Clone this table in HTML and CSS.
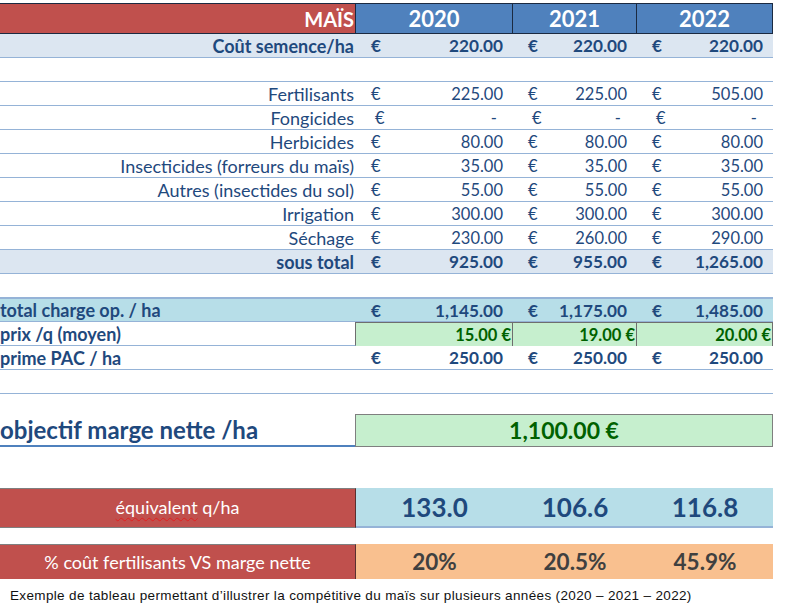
FILE: index.html
```html
<!DOCTYPE html>
<html lang="fr">
<head>
<meta charset="utf-8">
<title>Maïs</title>
<link rel="stylesheet" href="styles.css">
</head>
<body>
<div class="sheet">
  <div class="row head">
    <div class="lab">MAÏS</div>
    <div class="yr">2020</div>
    <div class="yr">2021</div>
    <div class="yr">2022</div>
  </div>
  <div class="row band bold">
    <div class="lab">Coût semence/ha</div>
    <div class="m"><span>€</span><span>220.00</span></div>
    <div class="m"><span>€</span><span>220.00</span></div>
    <div class="m"><span>€</span><span>220.00</span></div>
  </div>
  <div class="row"><div class="lab"></div></div>
  <div class="row">
    <div class="lab">Fertilisants</div>
    <div class="m"><span>€</span><span>225.00</span></div>
    <div class="m"><span>€</span><span>225.00</span></div>
    <div class="m"><span>€</span><span>505.00</span></div>
  </div>
  <div class="row">
    <div class="lab">Fongicides</div>
    <div class="m dash"><span>€</span><span>-</span></div>
    <div class="m dash"><span>€</span><span>-</span></div>
    <div class="m dash"><span>€</span><span>-</span></div>
  </div>
  <div class="row">
    <div class="lab">Herbicides</div>
    <div class="m"><span>€</span><span>80.00</span></div>
    <div class="m"><span>€</span><span>80.00</span></div>
    <div class="m"><span>€</span><span>80.00</span></div>
  </div>
  <div class="row">
    <div class="lab">Insecticides (forreurs du maïs)</div>
    <div class="m"><span>€</span><span>35.00</span></div>
    <div class="m"><span>€</span><span>35.00</span></div>
    <div class="m"><span>€</span><span>35.00</span></div>
  </div>
  <div class="row">
    <div class="lab">Autres (insectides du sol)</div>
    <div class="m"><span>€</span><span>55.00</span></div>
    <div class="m"><span>€</span><span>55.00</span></div>
    <div class="m"><span>€</span><span>55.00</span></div>
  </div>
  <div class="row">
    <div class="lab">Irrigation</div>
    <div class="m"><span>€</span><span>300.00</span></div>
    <div class="m"><span>€</span><span>300.00</span></div>
    <div class="m"><span>€</span><span>300.00</span></div>
  </div>
  <div class="row">
    <div class="lab">Séchage</div>
    <div class="m"><span>€</span><span>230.00</span></div>
    <div class="m"><span>€</span><span>260.00</span></div>
    <div class="m"><span>€</span><span>290.00</span></div>
  </div>
  <div class="row band bold">
    <div class="lab">sous total</div>
    <div class="m"><span>€</span><span>925.00</span></div>
    <div class="m"><span>€</span><span>955.00</span></div>
    <div class="m"><span>€</span><span>1,265.00</span></div>
  </div>
  <div class="row"><div class="lab"></div></div>
  <div class="row total bold">
    <div class="lab left">total charge op. / ha</div>
    <div class="m"><span>€</span><span>1,145.00</span></div>
    <div class="m"><span>€</span><span>1,175.00</span></div>
    <div class="m"><span>€</span><span>1,485.00</span></div>
  </div>
  <div class="row prix bold">
    <div class="lab left">prix /q (moyen)</div>
    <div class="g">15.00 €</div>
    <div class="g">19.00 €</div>
    <div class="g">20.00 €</div>
  </div>
  <div class="row bold">
    <div class="lab left">prime PAC / ha</div>
    <div class="m"><span>€</span><span>250.00</span></div>
    <div class="m"><span>€</span><span>250.00</span></div>
    <div class="m"><span>€</span><span>250.00</span></div>
  </div>
  <div class="row"><div class="lab"></div></div>
  <div class="obj">
    <div class="obj-lab">objectif marge nette /ha</div>
    <div class="obj-val">1,100.00 €</div>
  </div>
  <div class="big eq">
    <div class="red"><span class="spell">équivalent</span> q/ha</div>
    <div class="num">133.0</div>
    <div class="num">106.6</div>
    <div class="num">116.8</div>
  </div>
  <div class="big pct">
    <div class="red">% coût fertilisants VS marge nette</div>
    <div class="num">20%</div>
    <div class="num">20.5%</div>
    <div class="num">45.9%</div>
  </div>
  <p class="caption">Exemple de tableau permettant d’illustrer la compétitive du maïs sur plusieurs années (2020 – 2021 – 2022)</p>
</div>
</body>
</html>
```

FILE: styles.css
```css
* { box-sizing: border-box; }
html, body { margin: 0; padding: 0; background: #fff; }
body { font-family: Lato, "Open Sans", sans-serif; color: #1f497d; }

.sheet { width: 790px; padding-top: 3px; }

.row {
  display: grid;
  grid-template-columns: 356px 157px 124px 136px;
  width: 773px;
  height: 24px;
  border-bottom: 1px solid #95b3d7;
  font-size: 16.5px;
  line-height: 24px;
}
.row > div { white-space: nowrap; overflow: hidden; }

.lab { text-align: right; padding-right: 2px; font-size: 18px; }
.lab.left { text-align: left; padding-right: 0; }

.bold { font-weight: 700; }
.bold .m { font-size: 17.2px; }
.band { background: #dce6f1; }
.total { background: #b7dee8; border-top: 1px solid #95b3d7; height: 24px; line-height: 23px; }

.m { display: flex; justify-content: space-between; padding: 0 10px 0 15px; }
.m.dash { padding: 0 16px 0 19px; }

.head {
  height: 31px;
  border-top: 1px solid #1b2a41;
  border-bottom: 1px solid #1b2a41;
  color: #fff;
  font-weight: 700;
  line-height: 30px;
}
.head .lab { background: #c0504d; font-size: 20px; border-right: 1px solid #1b2a41; padding-right: 1px; }
.head .yr { background: #4f81bd; text-align: center; font-size: 22px; border-right: 1px solid #1b2a41; }

.prix { border-bottom: none; }
.prix .lab { border-bottom: 1px solid #95b3d7; border-right: 1px solid #6e6e6e; }
.prix .g {
  background: #c6efce;
  color: #006100;
  text-align: right;
  padding-right: 1px;
  font-size: 16.5px;
  border-top: 1px solid #6e6e6e;
  border-right: 1px solid #6e6e6e;
}

.obj {
  display: grid;
  grid-template-columns: 356px 417px;
  height: 53px;
}
.obj-lab {
  align-self: end;
  font-size: 24px;
  font-weight: 700;
  line-height: 30px;
  border-bottom: 2px solid #4f81bd;
  white-space: nowrap;
}
.obj-val {
  align-self: end;
  height: 33px;
  margin-left: -1px;
  border: 1px solid #7f7f7f;
  background: #c6efce;
  color: #006100;
  font-size: 23px;
  font-weight: 700;
  text-align: center;
  line-height: 30px;
}

.big {
  display: grid;
  grid-template-columns: 356px 157px 124px 136px;
  width: 773px;
}
.big .red {
  background: #c0504d;
  color: #fff;
  text-align: center;
  font-size: 18px;
  border-top: 1px solid #7f7f7f;
  border-right: 1px solid #5a3030;
  white-space: nowrap;
}
.big .num { text-align: center; font-weight: 700; }

.eq { margin-top: 41px; height: 36px; }
.eq .red { border-bottom: 1px solid #7f7f7f; line-height: 36px; }
.eq .num { background: #b7dee8; border-bottom: 2px solid #95b3d7; font-size: 26px; line-height: 38px; color: #1f497d; }

.spell { text-decoration: underline wavy #e02020; text-decoration-thickness: 1px; text-underline-offset: 3px; }

.pct { margin-top: 20px; height: 33px; }
.pct .red { line-height: 34px; }
.pct .num { background: #f9c08f; color: #404040; font-size: 22.5px; line-height: 35px; }

.caption {
  margin: 11px 0 0;
  padding-left: 10px;
  font-family: "Liberation Sans", Arial, sans-serif;
  font-size: 13.5px;
  letter-spacing: 0.35px;
  line-height: 16px;
  color: #111;
  white-space: nowrap;
}
```
